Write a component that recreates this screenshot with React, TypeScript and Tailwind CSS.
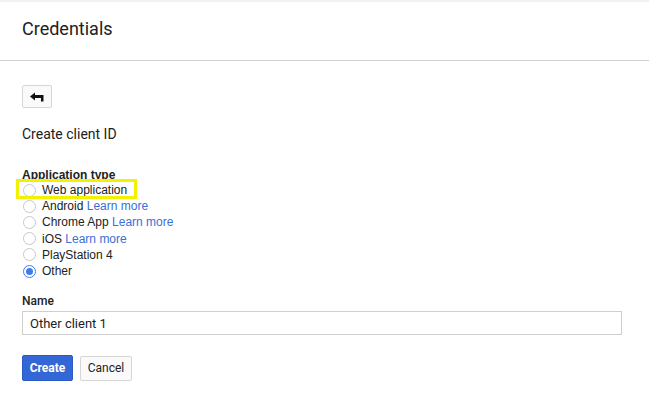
import React from 'react';

const types = [
  { label: 'Web application', link: false, checked: false, highlight: true },
  { label: 'Android', link: true, checked: false },
  { label: 'Chrome App', link: true, checked: false },
  { label: 'iOS', link: true, checked: false },
  { label: 'PlayStation 4', link: false, checked: false },
  { label: 'Other', link: false, checked: true },
];

const Radio = ({ checked }: { checked: boolean }) => (
  <span
    className={`flex h-[13px] w-[13px] shrink-0 items-center justify-center rounded-full border ${
      checked ? 'border-[#3f7ee8]' : 'border-[#c8c8c8]'
    } bg-white`}
  >
    {checked && <span className="h-[7px] w-[7px] rounded-full bg-[#3f7ee8]" />}
  </span>
);

export default function App() {
  return (
    <div className="h-[410px] w-[649px] overflow-hidden bg-white font-['Roboto',sans-serif] text-[#212121]">
      <div className="h-[2px] bg-[#f2f2f2]" />
      <header className="flex h-[59px] items-center border-b border-[#cfcfcf] px-[22px] pb-[5px]">
        <h1 className="text-[18px] font-normal text-[#212121]">Credentials</h1>
      </header>

      <main className="px-[22px]">
        <button className="mt-[24px] flex h-[23px] w-[30px] items-center justify-center rounded-[2px] border border-[#d6d6d6] bg-[#fafafa]">
          <svg width="16" height="12" viewBox="0 0 16 12">
            <path d="M1 5.5 L6 1.5 V4 H14.5 V10.5 H12 V7 H6 V9.5 Z" fill="#111" />
          </svg>
        </button>

        <h2 className="mt-[17px] text-[14px] leading-[18px] text-[#212121]">Create client ID</h2>

        <div className="mt-[25px] font-['Liberation_Sans',Arial,sans-serif] text-[12px]">
          <div className="font-bold leading-[14px] text-[#222]">Application type</div>
          <ul>
            {types.map((t) => (
              <li key={t.label} className="relative flex h-[16.2px] items-center gap-[6px] pl-[1px]">
                {t.highlight && (
                  <span className="pointer-events-none absolute left-[-6px] top-[-3px] h-[20px] w-[121px] border-[3px] border-[#f2f200]" />
                )}
                <Radio checked={t.checked} />
                <span className="text-[#222]">
                  {t.label}
                  {t.link && <span className="text-[#3a6fd8]"> Learn more</span>}
                </span>
              </li>
            ))}
          </ul>
        </div>

        <div className="mt-[15px] text-[12px] font-medium leading-[14px] text-[#222]">Name</div>
        <input
          readOnly
          value="Other client 1"
          className="mt-[3px] block h-[24px] w-[600px] border border-[#cfcfcf] px-[7px] text-[13px] text-[#222] outline-none"
        />

        <div className="mt-[20px] flex items-center gap-[7px]">
          <button className="h-[26px] w-[51px] rounded-[2px] border border-[#2a5bc4] bg-[#3367d6] text-[12px] font-bold text-white">
            Create
          </button>
          <button className="h-[25px] w-[52px] rounded-[2px] border border-[#d6d6d6] bg-[#fafafa] text-[12px] text-[#222]">
            Cancel
          </button>
        </div>
      </main>
    </div>
  );
}
